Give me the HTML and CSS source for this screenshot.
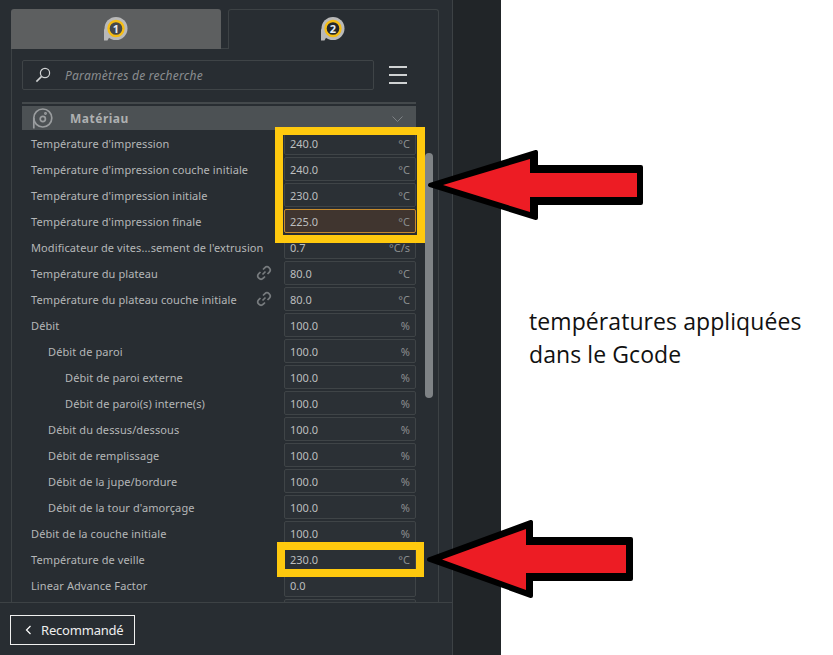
FILE: index.html
```html
<!DOCTYPE html>
<html lang="fr">
<head>
    <meta charset="UTF-8">
    <title>Paramètres d'impression</title>
    <link rel="stylesheet" href="styles.css">
</head>
<body>
    <div class="sidebar">
        <div class="tabs">
            <div class="tab">
                <svg class="badge" width="24" height="24" viewBox="0 0 24 24">
                    <circle cx="12" cy="11.500" r="11.500" fill="#b9b9b9"/>
                    <path d="M0 11.500V23.500H3.500L6 19Z" fill="#b9b9b9"/>
                    <circle cx="12" cy="11.500" r="7.500" fill="#45484a" stroke="#f5bd14" stroke-width="2.400"/>
                    <text x="12" y="15.500" class="badge-num">1</text>
                </svg>
            </div>
            <div class="tab tab-active">
                <svg class="badge" width="24" height="24" viewBox="0 0 24 24">
                    <circle cx="12" cy="11.500" r="11.500" fill="#b9b9b9"/>
                    <path d="M0 11.500V23.500H3.500L6 19Z" fill="#b9b9b9"/>
                    <circle cx="12" cy="11.500" r="7.500" fill="#22262b" stroke="#f5bd14" stroke-width="2.400"/>
                    <text x="12" y="15.500" class="badge-num">2</text>
                </svg>
            </div>
        </div>
        <div class="panel">
            <div class="search-row">
                <div class="search">
                    <svg width="16" height="16" viewBox="0 0 16 16" fill="none" stroke="#d0d2d3">
                        <circle cx="10" cy="6" r="4.600" stroke-width="1.200"/>
                        <path d="M6.600 9.400L1.400 14.600" stroke-width="1.600"/>
                    </svg>
                    <span>Paramètres de recherche</span>
                </div>
                <div class="menu"><i></i><i></i><i></i></div>
            </div>
            <div class="section-wrap">
                <div class="section">
                    <svg width="21" height="21" viewBox="0 0 21 21" fill="none" stroke="#9a9d9f" stroke-width="1.700">
                        <circle cx="10.800" cy="10" r="9"/>
                        <path d="M1.800 10V20.500"/>
                        <circle cx="10.800" cy="11" r="2.600"/>
                        <circle cx="13.500" cy="5.500" r=".6"/>
                    </svg>
                    <span class="section-name">Matériau</span>
                    <svg class="chev" width="11" height="6" viewBox="0 0 11 6" fill="none" stroke="#7d8184"><path d="M.5.500l5 5 5-5"/></svg>
                </div>
            </div>
            <div class="rows">
                <div class="row"><label>Température d'impression</label><div class="field"><span>240.0</span><span>°C</span></div></div>
                <div class="row"><label>Température d'impression couche initiale</label><div class="field"><span>240.0</span><span>°C</span></div></div>
                <div class="row"><label>Température d'impression initiale</label><div class="field"><span>230.0</span><span>°C</span></div></div>
                <div class="row"><label>Température d'impression finale</label><div class="field field-warn"><span>225.0</span><span>°C</span></div></div>
                <div class="row"><label>Modificateur de vites...sement de l'extrusion</label><div class="field"><span>0.7</span><span>°C/s</span></div></div>
                <div class="row"><label>Température du plateau</label>
                    <svg class="link" width="16" height="16" viewBox="0 0 16 16" fill="none" stroke="#777b7e" stroke-width="1.700"><path d="M6.500 9.500l3-3M7 4.500l1.700-1.700a3 3 0 0 1 4.500 4.500L11.500 9M9 11.500l-1.700 1.700a3 3 0 0 1-4.500-4.500L4.500 7"/></svg>
                    <div class="field"><span>80.0</span><span>°C</span></div></div>
                <div class="row"><label>Température du plateau couche initiale</label>
                    <svg class="link" width="16" height="16" viewBox="0 0 16 16" fill="none" stroke="#777b7e" stroke-width="1.700"><path d="M6.500 9.500l3-3M7 4.500l1.700-1.700a3 3 0 0 1 4.500 4.500L11.500 9M9 11.500l-1.700 1.700a3 3 0 0 1-4.500-4.500L4.500 7"/></svg>
                    <div class="field"><span>80.0</span><span>°C</span></div></div>
                <div class="row"><label>Débit</label><div class="field"><span>100.0</span><span>%</span></div></div>
                <div class="row lvl1"><label>Débit de paroi</label><div class="field"><span>100.0</span><span>%</span></div></div>
                <div class="row lvl2"><label>Débit de paroi externe</label><div class="field"><span>100.0</span><span>%</span></div></div>
                <div class="row lvl2"><label>Débit de paroi(s) interne(s)</label><div class="field"><span>100.0</span><span>%</span></div></div>
                <div class="row lvl1"><label>Débit du dessus/dessous</label><div class="field"><span>100.0</span><span>%</span></div></div>
                <div class="row lvl1"><label>Débit de remplissage</label><div class="field"><span>100.0</span><span>%</span></div></div>
                <div class="row lvl1"><label>Débit de la jupe/bordure</label><div class="field"><span>100.0</span><span>%</span></div></div>
                <div class="row lvl1"><label>Débit de la tour d'amorçage</label><div class="field"><span>100.0</span><span>%</span></div></div>
                <div class="row"><label>Débit de la couche initiale</label><div class="field"><span>100.0</span><span>%</span></div></div>
                <div class="row"><label>Température de veille</label><div class="field"><span>230.0</span><span>°C</span></div></div>
                <div class="row"><label>Linear Advance Factor</label><div class="field"><span>0.0</span><span></span></div></div>
                <div class="row"><label></label><div class="field"></div></div>
            </div>
            <div class="scrollbar"></div>
        </div>
        <div class="footer">
            <button class="btn-back">
                <svg width="7" height="10" viewBox="0 0 7 10" fill="none" stroke="#fff" stroke-width="1.200"><path d="M5.500 1l-4 4 4 4"/></svg>
                Recommandé
            </button>
        </div>
    </div>
    <div class="strip"></div>

    <!-- annotations collees sur la capture -->
    <div class="mark mark-top"></div>
    <div class="mark mark-bottom"></div>
    <svg class="arrows" width="833" height="655" viewBox="0 0 833 655">
        <g fill="#000" stroke="#000" stroke-width="4" stroke-linejoin="round">
            <polygon points="430,185 536,152 536,167 641,167 641,203 536,203 536,218"/>
            <polygon points="429,559.500 531,522 531,539 631,539 631,579 531,579 531,596"/>
        </g>
        <g fill="#ed1c24">
            <polygon points="443,185 530,159 530,173 637,173 637,197 530,197 530,212"/>
            <polygon points="442,559.500 526,529 526,545 626,545 626,573 526,573 526,590"/>
        </g>
    </svg>
    <p class="caption">températures appliquées<br>dans le Gcode</p>
</body>
</html>
```

FILE: styles.css
```css
* {
    margin: 0;
    padding: 0;
    box-sizing: border-box;
}

body {
    width: 833px;
    height: 655px;
    overflow: hidden;
    background: white;
    display: flex;
    font-family: 'Noto Sans', sans-serif;
    position: relative;
}

.sidebar {
    width: 453px;
    height: 655px;
    background: #282d32;
    border-right: 1px solid #3d4245;
    display: flex;
    flex-direction: column;
}

.strip {
    width: 48px;
    height: 655px;
    background: #212528;
}

.tabs {
    display: flex;
    gap: 7px;
    padding: 9px 13px 0 11px;
    height: 48px;
}

.tab {
    flex: 1;
    height: 40px;
    background: #5d5f60;
    border-radius: 3px 3px 0 0;
    display: flex;
    justify-content: center;
    padding-top: 8px;
    position: relative;
    z-index: 1;
}

.tab-active {
    background: #282d32;
    border: 1px solid #3d4245;
    border-bottom: none;
    padding-top: 7px;
}

.badge-num {
    font-size: 11px;
    font-weight: 700;
    fill: #e4ecf4;
    text-anchor: middle;
}

.panel {
    position: relative;
    height: 554px;
    margin: 0 13px 0 11px;
    border: 1px solid #3d4245;
    border-bottom: none;
    overflow: hidden;
}

.search-row {
    display: flex;
    align-items: center;
    padding: 11px 0 0 10px;
}

.search {
    width: 352px;
    height: 30px;
    border: 1px solid #3f4447;
    border-radius: 2px;
    display: flex;
    align-items: center;
    gap: 14px;
    padding-left: 12px;
}

.search span {
    font-size: 12px;
    font-style: italic;
    color: #8b8e90;
    letter-spacing: 0.25px;
}

.menu {
    margin-left: 15px;
    width: 18px;
    display: flex;
    flex-direction: column;
    gap: 6px;
}

.menu i {
    display: block;
    height: 2px;
    background: #d0d2d3;
}

.section-wrap {
    width: 394px;
    margin: 12px 0 0 10px;
    border-top: 2px solid #44494c;
    padding-top: 2px;
}

.section {
    height: 24px;
    background: #4c5154;
    display: flex;
    align-items: center;
    padding-left: 10px;
    position: relative;
}

.section-name {
    margin-left: 17px;
    font-size: 12px;
    font-weight: 700;
    letter-spacing: 0.5px;
    color: #aeb0b1;
}

.chev {
    position: absolute;
    right: 13px;
    top: 10px;
}

.rows {
    padding-left: 19px;
}

.row {
    height: 26px;
    width: 385px;
    display: flex;
    align-items: center;
}

.row label {
    flex: 1;
    font-size: 11px;
    letter-spacing: 0.1px;
    color: #b5b7b8;
}

.lvl1 label {
    padding-left: 17px;
}

.lvl2 label {
    padding-left: 34px;
}

.link {
    margin-right: 12px;
}

.field {
    width: 132px;
    height: 24px;
    border: 1px solid #3f4447;
    border-radius: 2px;
    background: #2b3035;
    display: flex;
    align-items: center;
    justify-content: space-between;
    padding: 0 5px;
    font-size: 11px;
    color: #bcbebf;
}

.field span:last-child {
    color: #8b8e90;
}

.field-warn {
    background: #40352f;
    border-color: #c68a2c;
}

.scrollbar {
    position: absolute;
    left: 413px;
    top: 104px;
    width: 8px;
    height: 245px;
    border-radius: 4px;
    background: #7f8386;
}

.footer {
    height: 53px;
    border-top: 1px solid #3d4245;
    padding: 12px 0 0 10px;
}

.btn-back {
    width: 125px;
    height: 30px;
    background: transparent;
    border: 1px solid #f0f0f0;
    display: flex;
    align-items: center;
    gap: 9px;
    padding-left: 14px;
    font-family: inherit;
    font-size: 13px;
    letter-spacing: -0.2px;
    color: #eeeeee;
}

.mark {
    position: absolute;
    border: 8px solid #ffc90e;
}

.mark-top {
    left: 275px;
    top: 127px;
    width: 150px;
    height: 116px;
}

.mark-bottom {
    left: 277px;
    top: 542px;
    width: 147px;
    height: 35px;
}

.arrows {
    position: absolute;
    left: 0;
    top: 0;
}

.caption {
    position: absolute;
    left: 529px;
    top: 305px;
    font-family: 'Open Sans', sans-serif;
    font-size: 23px;
    letter-spacing: 0.08px;
    line-height: 33px;
    color: #111;
}
```
